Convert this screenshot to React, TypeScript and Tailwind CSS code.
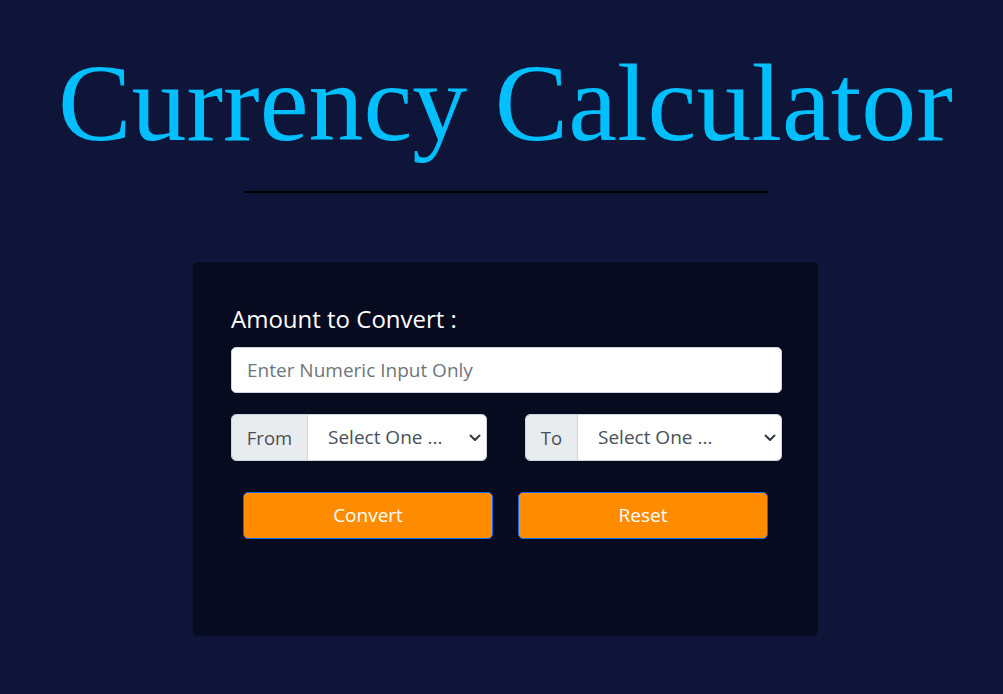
import React from "react";

const sans = { fontFamily: '"Open Sans", "Noto Sans", sans-serif' };

function Chevron() {
  return (
    <svg width="12" height="8" viewBox="0 0 12 8" className="text-[#343a40]">
      <path d="M1.5 1.5l4.5 4.5 4.5-4.5" fill="none" stroke="currentColor" strokeWidth="2" strokeLinecap="round" strokeLinejoin="round" />
    </svg>
  );
}

function SelectGroup({ label, labelW }: { label: string; labelW: string }) {
  return (
    <div className="flex h-[47px] rounded-[5px] overflow-hidden border border-[#ced4da]">
      <div className={`${labelW} flex items-center justify-center bg-[#e9ecef] text-[#495057] text-[18.5px] border-r border-[#ced4da]`}>
        {label}
      </div>
      <div className="flex-1 bg-white flex items-center pl-[20px] pr-[5px] text-[#495057] text-[19px]">
        <span className="flex-1">Select One ...</span>
        <Chevron />
      </div>
    </div>
  );
}

export default function App() {
  return (
    <div className="min-h-[694px] w-full bg-[#0f1538] flex flex-col items-center pl-[8px]" style={sans}>
      <h1
        className="text-[#00bfff] text-[110px] leading-none mt-[48px] whitespace-nowrap"
        style={{ fontFamily: '"Liberation Serif", "Times New Roman", serif' }}
      >
        Currency Calculator
      </h1>
      <div className="w-[524px] h-[2px] bg-black mt-[33px]" />
      <div className="mt-[69px] w-[625px] h-[374px] bg-[#070b1f] rounded-[5px] pl-[38px] pr-[36px] pt-[41px]">
        <div className="text-white text-[24px] leading-[32px]">Amount to Convert :</div>
        <div className="mt-[12px] h-[46px] bg-white rounded-[5px] border border-[#ced4da] flex items-center px-[15px]">
          <span className="text-[#6c757d] text-[19px]">Enter Numeric Input Only</span>
        </div>
        <div className="mt-[21px] grid grid-cols-[256px_257px] justify-between">
          <SelectGroup label="From" labelW="w-[76px]" />
          <SelectGroup label="To" labelW="w-[52px]" />
        </div>
        <div className="mt-[31px] flex justify-between pl-[12px] pr-[14px]">
          <button className="w-[250px] h-[47px] bg-[#ff8c00] border border-[#0d6efd] rounded-[5px] text-white text-[19px]">
            Convert
          </button>
          <button className="w-[250px] h-[47px] bg-[#ff8c00] border border-[#0d6efd] rounded-[5px] text-white text-[19px]">
            Reset
          </button>
        </div>
      </div>
    </div>
  );
}
